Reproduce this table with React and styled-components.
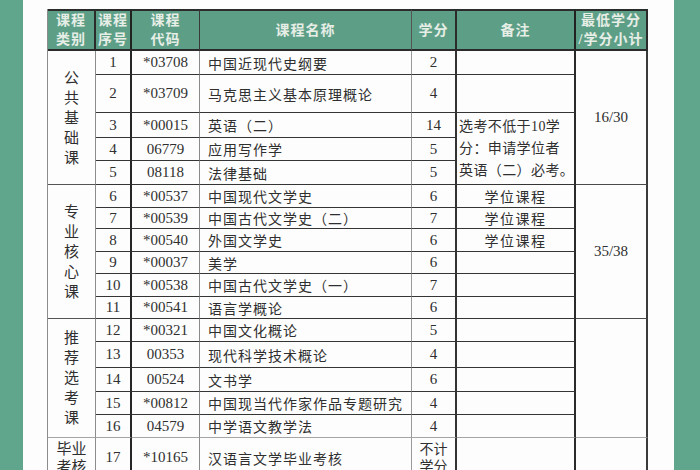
import React from "react";
import styled, { createGlobalStyle } from "styled-components";

const GlobalStyle = createGlobalStyle`
  html, body {
    margin: 0;
    padding: 0;
    background: #fff;
  }
  body {
    font-family: "Liberation Serif", "Noto Sans CJK SC", serif;
  }
`;

const Page = styled.div`
  display: flex;
  width: 700px;
  height: 470px;
  overflow: hidden;
`;

const Side = styled.div`
  flex: none;
  width: ${(p) => p.$w}px;
  background: #5fa68c;
`;

const Sheet = styled.div`
  flex: 1;
  padding: 9px 0 0 24px;
  background: #fdfdfd;
`;

const Table = styled.table`
  table-layout: fixed;
  width: 601px;
  border-collapse: separate;
  border-spacing: 0;
  border-left: 1px solid #8c8c8c;
  color: #2f2f2f;
  font-size: 15px;
`;

const HeadCell = styled.th`
  padding: 0;
  height: 38px;
  background: #5d9f86;
  color: #e6eee6;
  font-size: 14px;
  font-weight: 700;
  line-height: 19px;
  letter-spacing: 1px;
  text-align: center;
  border-top: 2px solid #2b2b2b;
  border-bottom: 2px solid #2b2b2b;
  border-right: ${(p) => p.$right};
`;

const Cell = styled.td`
  padding: 0 0 0 ${(p) => p.$pad || 0}px;
  text-align: ${(p) => p.$align || "center"};
  vertical-align: middle;
  white-space: nowrap;
  border-right: ${(p) => p.$right};
  border-bottom: ${(p) => p.$bottom || "1px solid #353535"};
`;

const Name = styled(Cell)`
  font-size: 14px;
  letter-spacing: 1px;
`;

const Note = styled(Cell)`
  font-size: 14px;
  letter-spacing: ${(p) => (p.$lines ? "0.4px" : "1.5px")};
  line-height: ${(p) => (p.$lines ? "22px" : "normal")};
`;

const Vertical = styled.div`
  display: inline-flex;
  flex-direction: column;
  align-items: center;
  font-size: 15px;
  line-height: ${(p) => p.$lh || 20}px;
`;

const Stacked = styled.div`
  font-size: 14px;
  line-height: 17px;
`;

const Row = styled.tr`
  height: ${(p) => p.$h}px;
`;

const widths = [48, 36, 68, 212, 45, 119, 72];

const rightBorders = [
  "1px solid #8c8c8c",
  "2px solid #262626",
  "1px solid #8a8a8a",
  "1px solid #9a9a9a",
  "2px solid #333",
  "2px solid #2a2a2a",
  "2px solid #3a3a3a",
];

const headRight = [
  "2px solid #2b2b2b",
  "2px solid #222",
  "1px solid #3a3a3a",
  "1px solid #555",
  "2px solid #2b2b2b",
  "2px solid #222",
  "2px solid #2b2b2b",
];

const heads = [
  ["课程", "类别"],
  ["课程", "序号"],
  ["课程", "代码"],
  ["课程名称"],
  ["学分"],
  ["备注"],
  ["最低学分", "/学分小计"],
];

const rows = [
  { n: "1", code: "*03708", name: "中国近现代史纲要", cr: "2", h: 24 },
  { n: "2", code: "*03709", name: "马克思主义基本原理概论", cr: "4", h: 38 },
  { n: "3", code: "*00015", name: "英语（二）", cr: "14", h: 25 },
  { n: "4", code: "06779", name: "应用写作学", cr: "5", h: 23 },
  { n: "5", code: "08118", name: "法律基础", cr: "5", h: 24 },
  { n: "6", code: "*00537", name: "中国现代文学史", cr: "6", h: 23 },
  { n: "7", code: "*00539", name: "中国古代文学史（二）", cr: "7", h: 21 },
  { n: "8", code: "*00540", name: "外国文学史", cr: "6", h: 23 },
  { n: "9", code: "*00037", name: "美学", cr: "6", h: 22 },
  { n: "10", code: "*00538", name: "中国古代文学史（一）", cr: "7", h: 23 },
  { n: "11", code: "*00541", name: "语言学概论", cr: "6", h: 22 },
  { n: "12", code: "*00321", name: "中国文化概论", cr: "5", h: 23 },
  { n: "13", code: "00353", name: "现代科学技术概论", cr: "4", h: 26 },
  { n: "14", code: "00524", name: "文书学", cr: "6", h: 24 },
  { n: "15", code: "*00812", name: "中国现当代作家作品专题研究", cr: "4", h: 23 },
  { n: "16", code: "04579", name: "中学语文教学法", cr: "4", h: 23 },
  { n: "17", code: "*10165", name: "汉语言文学毕业考核", cr: ["不计", "学分"], h: 40 },
];

// merged cells: category column, remark column, subtotal column
const categories = {
  0: { span: 5, chars: "公共基础课" },
  5: { span: 6, chars: "专业核心课" },
  11: { span: 5, chars: "推荐选考课" },
  16: { span: 1, lines: ["毕业", "考核"] },
};

const remarks = {
  2: { span: 3, lines: ["选考不低于10学", "分：申请学位者", "英语（二）必考。"] },
  5: { span: 1, text: "学位课程" },
  6: { span: 1, text: "学位课程" },
  7: { span: 1, text: "学位课程" },
};

const totals = {
  0: { span: 5, text: "16/30" },
  5: { span: 6, text: "35/38" },
  11: { span: 5, text: "" },
  16: { span: 1, text: "" },
};

const covered = (map, i) =>
  Object.entries(map).some(
    ([start, c]) => i > Number(start) && i < Number(start) + c.span
  );

const lightLine = "1px solid #a5a5a5";

export default function App() {
  return (
    <Page>
      <GlobalStyle />
      <Side $w={23} />
      <Sheet>
        <Table>
          <colgroup>
            {widths.map((w, i) => (
              <col key={i} style={{ width: w }} />
            ))}
          </colgroup>
          <thead>
            <tr>
              {heads.map((h, i) => (
                <HeadCell key={i} $right={headRight[i]}>
                  {h.map((line, j) => (
                    <div key={j}>{line}</div>
                  ))}
                </HeadCell>
              ))}
            </tr>
          </thead>
          <tbody>
            {rows.map((r, i) => {
              const bottom = i === 15 ? lightLine : undefined;
              const cat = categories[i];
              const rem = remarks[i];
              const tot = totals[i];
              return (
                <Row key={r.n} $h={r.h}>
                  {cat && (
                    <Cell
                      rowSpan={cat.span}
                      $right={rightBorders[0]}
                      $bottom={i + cat.span - 1 === 15 ? lightLine : "1px solid #555"}
                    >
                      {cat.chars ? (
                        <Vertical>
                          {cat.chars.split("").map((c, k) => (
                            <span key={k}>{c}</span>
                          ))}
                        </Vertical>
                      ) : (
                        <Vertical $lh={18}>
                          {cat.lines.map((c, k) => (
                            <span key={k}>{c}</span>
                          ))}
                        </Vertical>
                      )}
                    </Cell>
                  )}
                  <Cell $right={rightBorders[1]} $bottom={bottom}>
                    {r.n}
                  </Cell>
                  <Cell $right={rightBorders[2]} $bottom={bottom}>
                    {r.code}
                  </Cell>
                  <Name $right={rightBorders[3]} $bottom={bottom} $align="left" $pad={8}>
                    {r.name}
                  </Name>
                  <Cell $right={rightBorders[4]} $bottom={bottom}>
                    {Array.isArray(r.cr) ? (
                      <Stacked>
                        {r.cr.map((c, k) => (
                          <div key={k}>{c}</div>
                        ))}
                      </Stacked>
                    ) : (
                      r.cr
                    )}
                  </Cell>
                  {!covered(remarks, i) &&
                    (rem ? (
                      <Note
                        rowSpan={rem.span}
                        $right={rightBorders[5]}
                        $bottom={bottom}
                        $align={rem.lines ? "left" : "center"}
                        $pad={rem.lines ? 2 : 0}
                        $lines={!!rem.lines}
                      >
                        {rem.lines
                          ? rem.lines.map((l, k) => <div key={k}>{l}</div>)
                          : rem.text}
                      </Note>
                    ) : (
                      <Note $right={rightBorders[5]} $bottom={bottom} />
                    ))}
                  {tot && (
                    <Cell
                      rowSpan={tot.span}
                      $right={rightBorders[6]}
                      $bottom={i + tot.span - 1 === 15 ? lightLine : "1px solid #4a4a4a"}
                    >
                      {tot.text}
                    </Cell>
                  )}
                </Row>
              );
            })}
          </tbody>
        </Table>
      </Sheet>
      <Side $w={26} />
    </Page>
  );
}
